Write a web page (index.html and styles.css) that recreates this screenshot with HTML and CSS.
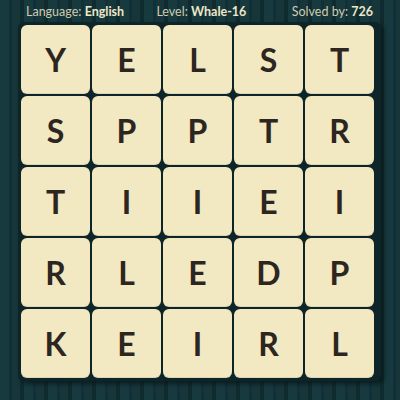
FILE: index.html
```html
<!DOCTYPE html>
<html>
<head>
<meta charset="utf-8">
<link rel="stylesheet" href="styles.css">
</head>
<body>
<div class="page">
  <header class="info">
    <span class="item lang">Language: <b>English</b></span>
    <span class="item level">Level: <b>Whale-16</b></span>
    <span class="item solved">Solved by: <b>726</b></span>
  </header>
  <div class="board">
    <div class="tile">Y</div><div class="tile">E</div><div class="tile">L</div><div class="tile">S</div><div class="tile">T</div>
    <div class="tile">S</div><div class="tile">P</div><div class="tile">P</div><div class="tile">T</div><div class="tile">R</div>
    <div class="tile">T</div><div class="tile">I</div><div class="tile">I</div><div class="tile">E</div><div class="tile">I</div>
    <div class="tile">R</div><div class="tile">L</div><div class="tile">E</div><div class="tile">D</div><div class="tile">P</div>
    <div class="tile">K</div><div class="tile">E</div><div class="tile">I</div><div class="tile">R</div><div class="tile">L</div>
  </div>
</div>
</body>
</html>
```
FILE: styles.css
```css
html, body {
  margin: 0;
  padding: 0;
}
.page {
  width: 400px;
  height: 400px;
  overflow: hidden;
  background: repeating-linear-gradient(90deg,
    #173a3e 0px, #173a3e 9px,
    #12303a 9px, #12303a 12px,
    #163639 12px, #163639 20px,
    #102b30 20px, #102b30 24px);
  font-family: Lato, "Open Sans", sans-serif;
}
.info {
  height: 22px;
  display: flex;
  align-items: center;
  padding: 0 27px 0 26px;
  color: #cfcbb0;
  font-size: 12.5px;
  white-space: nowrap;
}
.info b {
  color: #eee7c8;
  font-weight: 700;
}
.lang { width: 131px; }
.level { width: 136px; }
.solved { margin-left: auto; }
.board {
  margin-left: 18px;
  width: 357px;
  padding: 3px;
  background: #0d2529;
  border-radius: 6px;
  box-shadow: 3px 3px 4px rgba(5, 20, 22, 0.7);
  display: grid;
  grid-template-columns: repeat(5, 69px);
  grid-auto-rows: 69px;
  gap: 2px;
}
.tile {
  background: #f2e8c2;
  border-radius: 6px;
  display: flex;
  align-items: center;
  justify-content: center;
  color: #2d2620;
  font-family: Lato, sans-serif;
  font-weight: 700;
  font-size: 32px;
  box-shadow: inset 0 -1px 0 rgba(0,0,0,0.08);
}
```
